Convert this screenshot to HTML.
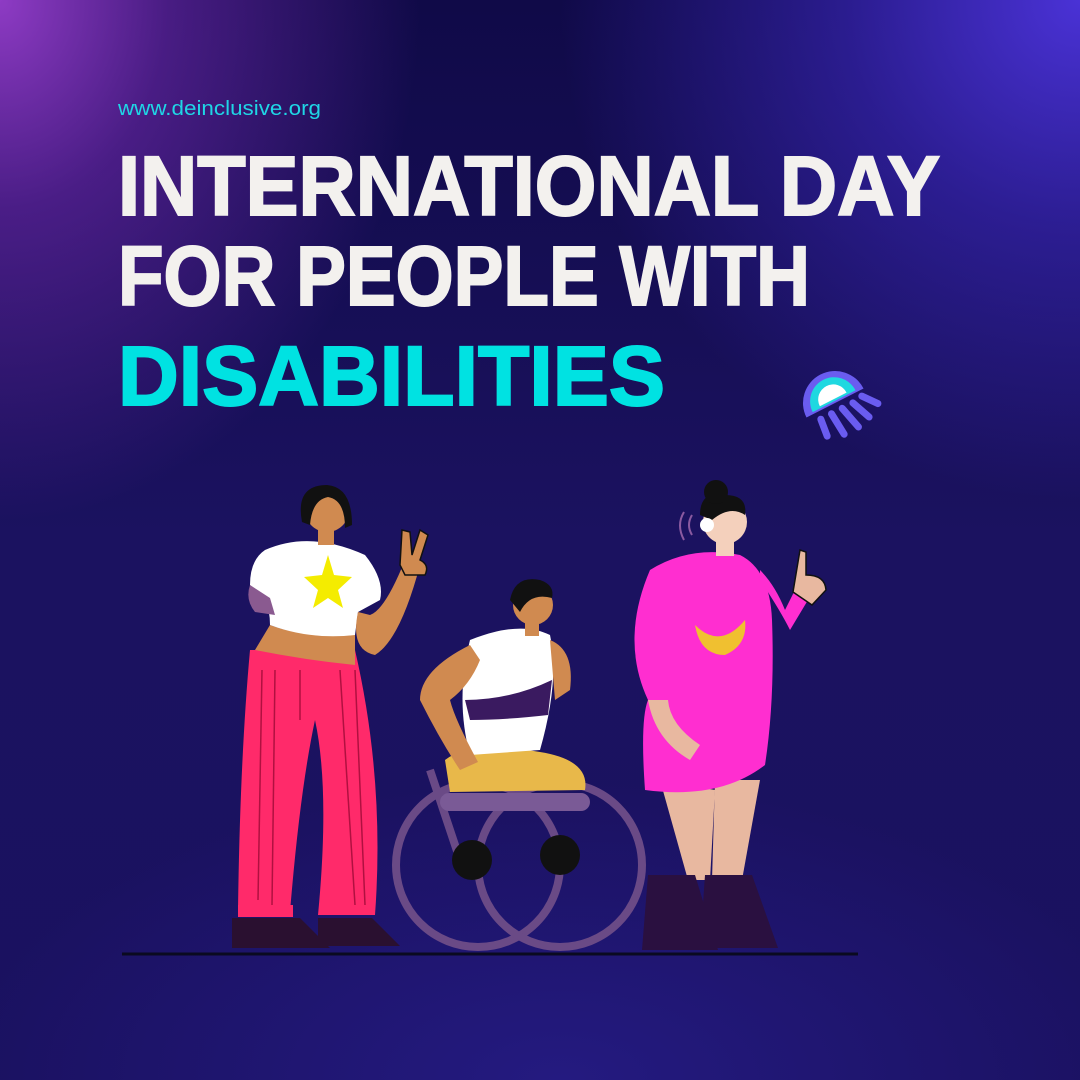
<!DOCTYPE html>
<html><head><meta charset="utf-8"><style>
html,body{margin:0;padding:0}
body{width:1080px;height:1080px;overflow:hidden;position:relative;
background:
radial-gradient(ellipse 420px 520px at 0px 0px,#8e3bc4 0%,rgba(110,40,170,.6) 40%,rgba(40,20,100,0) 100%),
radial-gradient(ellipse 520px 500px at 1080px 0px,#4a32d6 0%,rgba(60,40,190,.6) 45%,rgba(30,20,100,0) 100%),
radial-gradient(ellipse 600px 300px at 560px 1080px,#241a80 0%,rgba(30,20,110,0) 100%),
linear-gradient(180deg,#100a48 0%,#1b1260 50%,#1a1160 100%);}
svg{position:absolute;left:0;top:0}
</style></head><body>
<svg width="1080" height="1080" viewBox="0 0 1080 1080">
<text x="118" y="115" font-family="Liberation Sans,sans-serif" font-size="20" fill="#1fd6e6" textLength="203" lengthAdjust="spacingAndGlyphs">www.deinclusive.org</text>
<g font-family="Liberation Sans,sans-serif" font-weight="bold" font-size="84" stroke-width="2">
<text x="118" y="215" fill="#f3f1ee" stroke="#f3f1ee" textLength="822" lengthAdjust="spacingAndGlyphs">INTERNATIONAL DAY</text>
<text x="118" y="305" fill="#f3f1ee" stroke="#f3f1ee" textLength="692" lengthAdjust="spacingAndGlyphs">FOR PEOPLE WITH</text>
<text x="118" y="405" fill="#00e2e2" stroke="#00e2e2" textLength="547" lengthAdjust="spacingAndGlyphs">DISABILITIES</text>
</g>
<!-- logo -->
<g transform="translate(835,403) rotate(-27)">
<path d="M-32 0 A32 32 0 0 1 32 0 Z" fill="#6a5cf0"/>
<path d="M-24 -2 A24 24 0 0 1 24 -2 Z" fill="#1fd8e0"/>
<path d="M-15 -4 A15 15 0 0 1 15 -4 Z" fill="#fff"/>
<g stroke="#6a5cf0" stroke-width="7" stroke-linecap="round">
<line x1="-20" y1="8" x2="-22" y2="26"/><line x1="-8" y1="8" x2="-6" y2="32"/>
<line x1="4" y1="8" x2="10" y2="32"/><line x1="16" y1="8" x2="24" y2="28"/><line x1="27" y1="6" x2="38" y2="20"/>
</g></g>
<!-- ground -->
<line x1="122" y1="954" x2="858" y2="954" stroke="#0a0a20" stroke-width="3"/>
<!-- wheelchair -->
<g fill="none" stroke="#6a4a86" stroke-width="8">
<circle cx="478" cy="865" r="82"/><circle cx="560" cy="865" r="82"/>
<path d="M430 770 L460 860"/></g>
<rect x="440" y="793" width="150" height="18" rx="9" fill="#7a5a96"/>
<circle cx="472" cy="860" r="20" fill="#111"/><circle cx="560" cy="855" r="20" fill="#111"/>
<!-- seated person -->
<path d="M445 760 Q470 740 540 752 Q590 760 585 790 L450 792 Z" fill="#e8b84a"/>
<path d="M470 640 Q520 620 550 635 Q560 680 540 750 L470 755 Q455 700 470 640Z" fill="#fff"/>
<path d="M465 700 Q510 700 552 680 L548 715 Q505 720 470 720Z" fill="#3a1a60"/>
<path d="M470 645 Q420 670 420 700 Q440 740 460 770 L478 762 Q455 720 450 700 Q470 685 480 660Z" fill="#d08a50"/>
<path d="M550 640 Q575 650 570 690 L555 700Z" fill="#d08a50"/>
<circle cx="533" cy="605" r="20" fill="#d08a50"/><rect x="525" y="620" width="14" height="16" fill="#d08a50"/>
<path d="M510 600 Q515 575 540 580 Q555 585 552 598 Q530 592 520 612Z" fill="#111"/>
<!-- left woman -->
<path d="M250 650 Q240 760 238 910 L290 912 Q300 790 315 720 Q330 790 318 915 L375 915 Q385 780 355 650 Z" fill="#ff2a6a"/>
<g stroke="#b01040" stroke-width="1.5"><line x1="262" y1="670" x2="258" y2="900"/><line x1="275" y1="670" x2="272" y2="905"/><line x1="340" y1="670" x2="355" y2="905"/><line x1="355" y1="670" x2="365" y2="905"/><line x1="300" y1="670" x2="300" y2="720"/></g>
<rect x="238" y="905" width="55" height="12" fill="#ff2a6a"/>
<path d="M232 918 L300 918 L330 948 L232 948Z" fill="#2a1030"/>
<path d="M318 918 L372 918 L400 946 L318 946Z" fill="#2a1030"/>
<path d="M270 625 Q310 640 355 630 L355 665 Q305 660 255 650Z" fill="#d08a50"/>
<path d="M265 550 Q310 530 365 555 Q385 580 380 600 L358 612 L355 635 Q310 640 270 625 Q270 610 265 600 L250 585 Q250 560 265 550Z" fill="#fff"/>
<polygon points="328,555 334,575 352,577 338,590 343,608 328,598 313,608 318,590 304,577 322,575" fill="#f4ec00"/>
<path d="M250 585 Q245 600 255 612 L275 615 L270 598Z" fill="#8a5a90"/>
<path d="M358 612 Q350 650 375 655 Q400 640 420 565 L405 560 Q385 610 370 615Z" fill="#d08a50"/>
<path d="M400 565 L402 530 L410 532 L412 555 L420 530 L428 535 L420 560 Q430 565 425 575 L405 575Z" fill="#d08a50" stroke="#111" stroke-width="1.5"/>
<circle cx="327" cy="510" r="22" fill="#d08a50"/><rect x="318" y="525" width="16" height="20" fill="#d08a50"/>
<path d="M302 522 Q295 485 327 485 Q352 487 352 525 L345 528 Q345 500 328 497 Q312 500 310 525Z" fill="#111"/>
<!-- right woman -->
<path d="M660 780 L715 790 L710 880 L688 880Z" fill="#e8b8a0"/>
<path d="M715 780 L760 780 L742 880 L712 880Z" fill="#e8b8a0"/>
<path d="M648 875 L695 875 L718 950 L642 950Z" fill="#2a1040"/>
<path d="M705 875 L752 875 L778 948 L700 948Z" fill="#2a1040"/>
<path d="M650 570 Q690 545 740 555 Q770 570 772 620 Q775 700 765 765 Q720 800 645 790 Q640 720 648 700 Q620 640 650 570Z" fill="#ff2ed0"/>
<path d="M760 580 Q780 610 790 630 L808 600 L795 590 L785 610 Q775 585 760 570Z" fill="#ff2ed0"/>
<path d="M793 592 L800 550 L806 552 L806 575 Q825 575 826 590 L812 605Z" fill="#e8b8a0" stroke="#111" stroke-width="1.5"/>
<path d="M648 700 Q655 740 690 760 L700 745 Q670 725 668 700Z" fill="#e8b8a0"/>
<path d="M695 625 Q720 650 745 620 Q748 645 725 655 Q700 655 695 625Z" fill="#f0c030"/>
<circle cx="725" cy="522" r="22" fill="#f4d0bc"/><rect x="716" y="540" width="18" height="16" fill="#f4d0bc"/>
<path d="M700 515 Q700 490 725 495 Q748 495 745 515 Q730 505 712 520Z" fill="#111"/>
<circle cx="716" cy="492" r="12" fill="#111"/>
<circle cx="707" cy="525" r="7" fill="#fff"/>
<path d="M692 515 Q686 525 692 535 M684 512 Q676 525 684 540" fill="none" stroke="#8a5aa0" stroke-width="2"/>
</svg>
</body></html>
